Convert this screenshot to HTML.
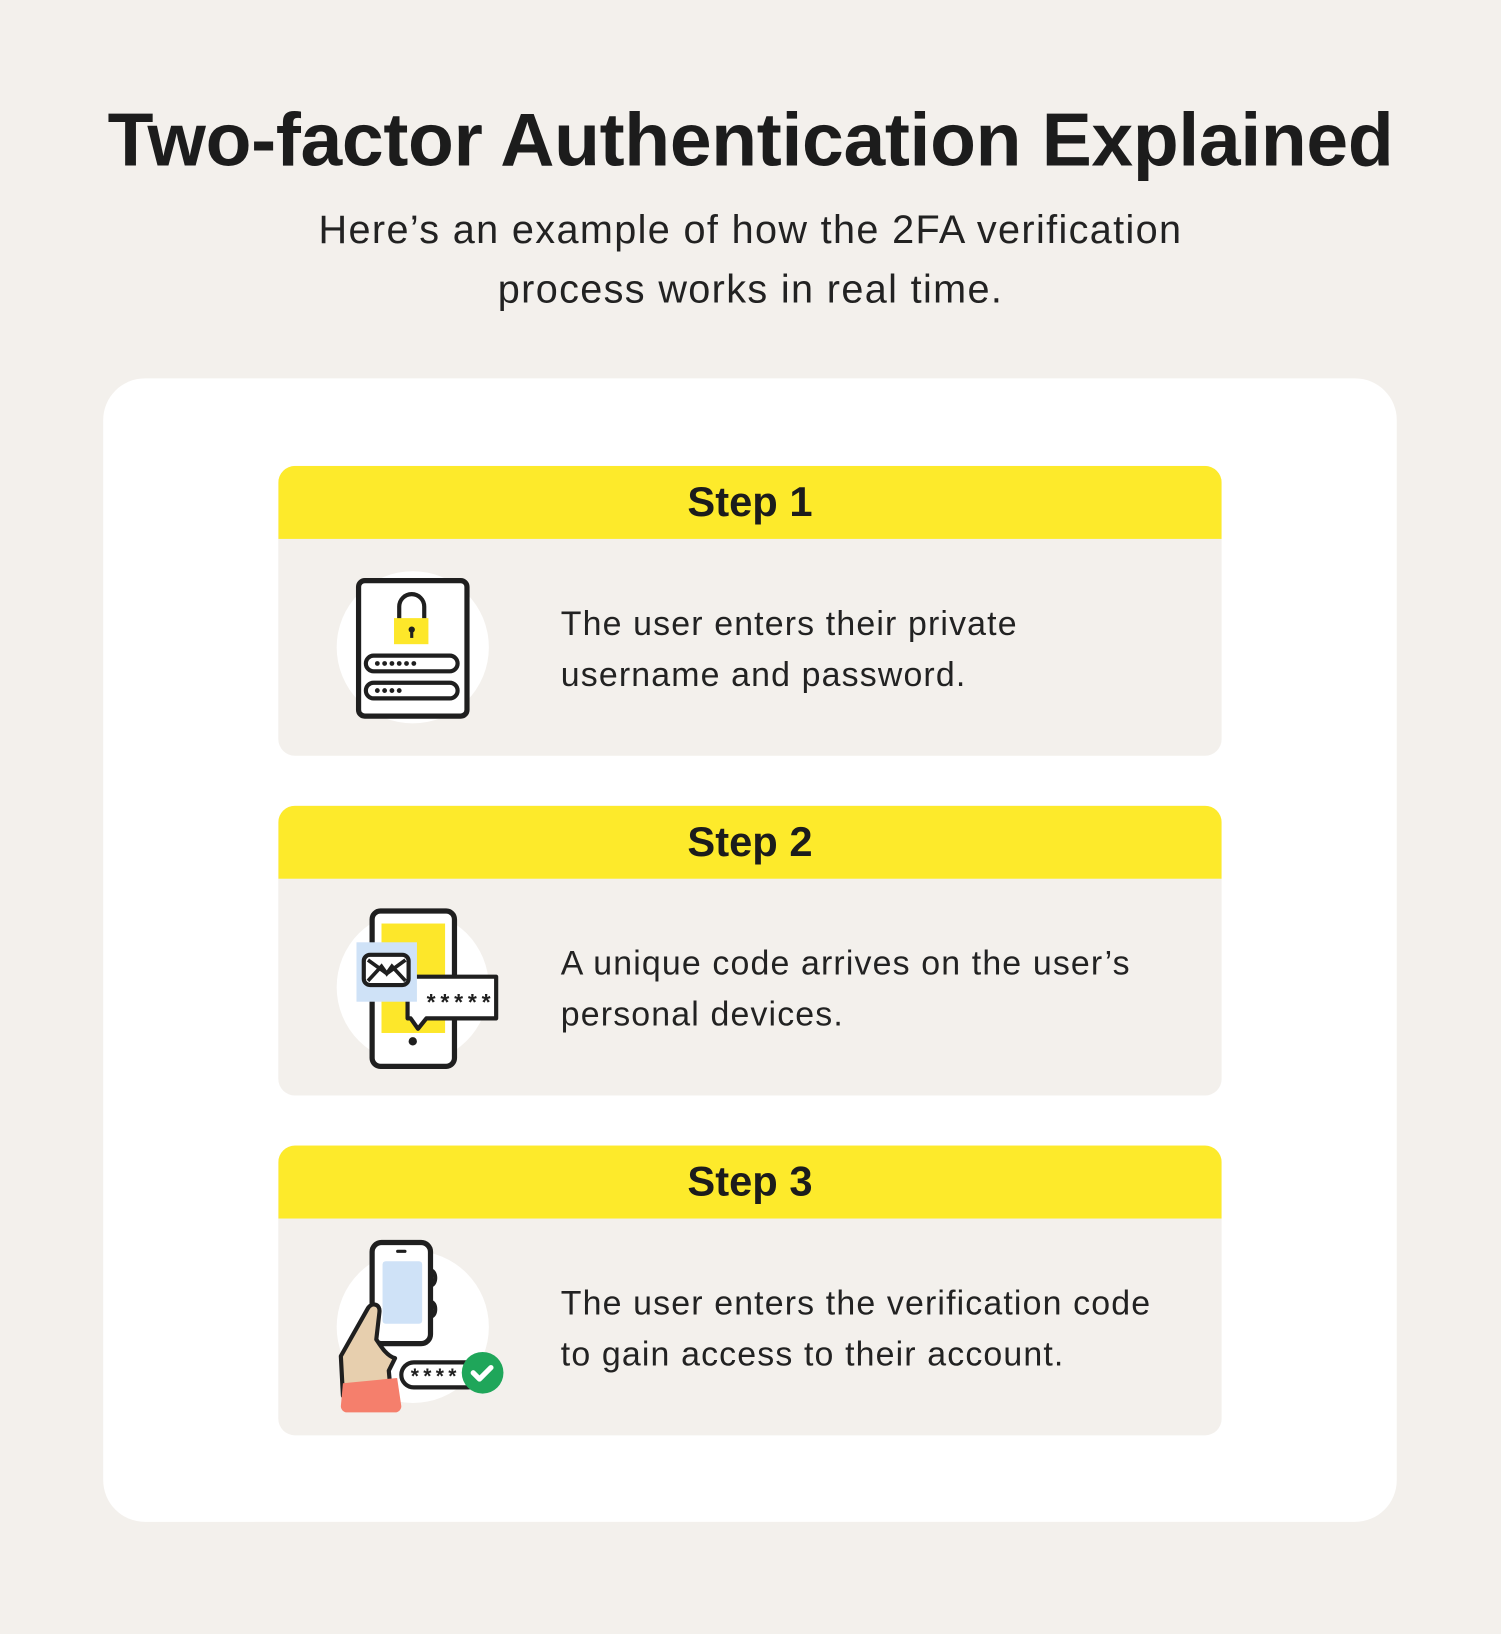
<!DOCTYPE html>
<html><head><style>
html,body{margin:0;padding:0;background:#f3f0ec;}
body{width:1501px;height:1634px;overflow:hidden;font-family:"Liberation Sans",sans-serif;color:#1f1f1f;}
#w{width:1440px;height:1568px;position:relative;transform:scale(1.04236);transform-origin:0 0;}
h1{position:absolute;top:94px;left:0;width:1440px;text-align:center;margin:0;font-size:72px;font-weight:bold;letter-spacing:-0.3px;color:#1c1c1c;}
.sub{position:absolute;top:193px;left:0;width:1440px;text-align:center;font-size:38px;line-height:57px;color:#222;letter-spacing:1.3px;}
.card{position:absolute;left:99px;top:363px;width:1241px;height:1097px;background:#fff;border-radius:40px;}
.step{position:absolute;left:267px;width:905px;height:278px;background:#f3f0ec;border-radius:16px;overflow:hidden;}
.hd{height:70px;background:#fdea2b;text-align:center;font-weight:bold;font-size:40px;line-height:70px;color:#1c1c1c;}
.tx{position:absolute;left:271px;top:127px;font-size:32.5px;line-height:49px;color:#222;letter-spacing:1.1px;}
.ic{position:absolute;left:50px;top:82px;width:180px;height:180px;}
</style></head><body><div id="w">
<h1>Two-factor Authentication Explained</h1>
<div class="sub">Here’s an example of how the 2FA verification<br>process works in real time.</div>
<div class="card"></div>

<div class="step" style="top:447px"><div class="hd">Step 1</div>
<svg class="ic" viewBox="50 82 180 180">
<circle cx="129" cy="174" r="73" fill="#fff"/>
<rect x="77" y="110" width="104" height="130" rx="6" fill="#fff" stroke="#1f1f1f" stroke-width="5"/>
<path d="M116 147v-12a12 12 0 0 1 24 0v12" fill="none" stroke="#1f1f1f" stroke-width="4"/>
<rect x="111" y="146" width="33" height="25" fill="#fde72a"/>
<circle cx="128" cy="157" r="3" fill="#1f1f1f"/><rect x="126.5" y="158" width="3" height="7" fill="#1f1f1f"/>
<rect x="84" y="182" width="88" height="15" rx="7.5" fill="#fff" stroke="#1f1f1f" stroke-width="4"/>
<rect x="84" y="208" width="88" height="15" rx="7.5" fill="#fff" stroke="#1f1f1f" stroke-width="4"/>
<g fill="#1f1f1f"><circle cx="95" cy="189.5" r="2.3"/><circle cx="102" cy="189.5" r="2.3"/><circle cx="109" cy="189.5" r="2.3"/><circle cx="116" cy="189.5" r="2.3"/><circle cx="123" cy="189.5" r="2.3"/><circle cx="130" cy="189.5" r="2.3"/>
<circle cx="95" cy="215.5" r="2.3"/><circle cx="102" cy="215.5" r="2.3"/><circle cx="109" cy="215.5" r="2.3"/><circle cx="116" cy="215.5" r="2.3"/></g>
</svg>
<div class="tx">The user enters their private<br>username and password.</div></div>

<div class="step" style="top:773px"><div class="hd">Step 2</div>
<svg class="ic" viewBox="50 82 180 180">
<circle cx="129" cy="174" r="73" fill="#fff"/>
<rect x="90" y="101" width="79" height="149" rx="8" fill="#fff" stroke="#1f1f1f" stroke-width="5"/>
<rect x="99" y="113" width="61" height="105" fill="#fde72a"/>
<circle cx="129" cy="226" r="4" fill="#1f1f1f"/>
<path d="M124 164h85v40h-67l-8 10-7-10h-3z" fill="#fff" stroke="#1f1f1f" stroke-width="4" stroke-linejoin="round"/>
<text x="140" y="197" font-size="22" font-weight="bold" fill="#1f1f1f" font-family="Liberation Mono,monospace">*****</text>
<rect x="75" y="131" width="58" height="57" fill="#cfe2f7"/>
<rect x="82" y="143" width="43" height="29" rx="6" fill="#fff" stroke="#1f1f1f" stroke-width="4"/>
<path d="M86 168l13-14 5 7 5-7 13 14M86 148l18 13 18-13" fill="none" stroke="#1f1f1f" stroke-width="3.5"/>
</svg>
<div class="tx">A unique code arrives on the user’s<br>personal devices.</div></div>

<div class="step" style="top:1099px"><div class="hd">Step 3</div>
<svg class="ic" viewBox="50 82 180 180">
<circle cx="129" cy="174" r="73" fill="#fff"/>
<rect x="90" y="93" width="56" height="97" rx="9" fill="#fff" stroke="#1f1f1f" stroke-width="5"/>
<rect x="100" y="111" width="38" height="60" rx="3" fill="#cfe2f7"/>
<rect x="113" y="100" width="10" height="3" rx="1.5" fill="#1f1f1f"/>
<path d="M146 120c6 0 6 14 0 14M146 150c6 0 6 14 0 14" fill="none" stroke="#1f1f1f" stroke-width="4"/>
<path d="M62 240l-2-38 26-46c4-6 12-4 11 4l-3 26c4 6 10 16 18 18l-6 12 2 22z" fill="#e7cfae" stroke="#1f1f1f" stroke-width="4" stroke-linejoin="round"/>
<rect x="118" y="208" width="76" height="24" rx="12" fill="#fff" stroke="#1f1f1f" stroke-width="4"/>
<text x="125" y="229" font-size="20" font-weight="bold" fill="#1f1f1f" font-family="Liberation Mono,monospace">****</text>
<circle cx="196" cy="218" r="20" fill="#1fa65a"/>
<path d="M187 218l6 6 11-11" fill="none" stroke="#fff" stroke-width="5" stroke-linecap="round" stroke-linejoin="round"/>
<path d="M62 228l52-5 4 27a6 6 0 0 1-6 6H66a6 6 0 0 1-6-6z" fill="#f57f6c"/>
</svg>
<div class="tx">The user enters the verification code<br>to gain access to their account.</div></div>
</div></body></html>
